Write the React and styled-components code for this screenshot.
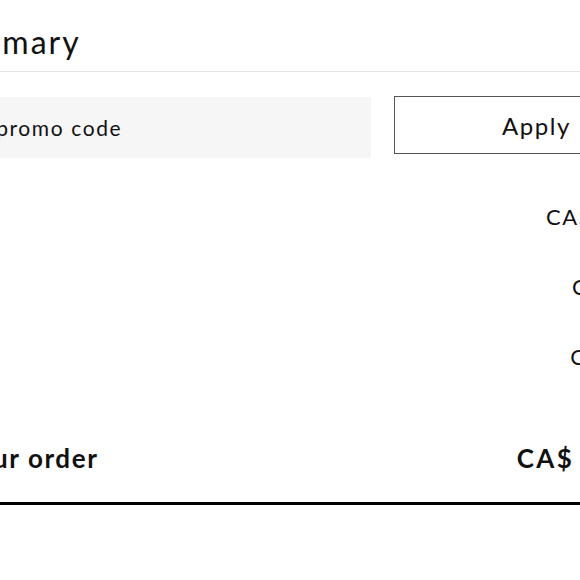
import React from "react";
import styled, { createGlobalStyle } from "styled-components";

const Global = createGlobalStyle`
  html, body { margin: 0; padding: 0; background: #fff; }
  body { font-family: Lato, "Noto Sans", sans-serif; color: #111; }
`;

const Viewport = styled.div`
  width: 580px;
  height: 580px;
  overflow: hidden;
  background: #fff;
`;

const Summary = styled.section`
  width: 835px;
  margin-left: -156px;
  display: flex;
  flex-direction: column;
`;

const Header = styled.header`
  padding: 23px 0 10px;
  border-bottom: 1px solid #e6e6e6;
`;

const Title = styled.h2`
  margin: 0 0 0 -8px;
  font-size: 32px;
  font-weight: 400;
  line-height: 38px;
  letter-spacing: 2px;
`;

const PromoForm = styled.form`
  margin-top: 25px;
  display: grid;
  grid-template-columns: 1fr 285px;
  column-gap: 23px;
  align-items: start;
`;

const PromoInput = styled.input`
  height: 61px;
  box-sizing: border-box;
  border: none;
  background: #f6f6f6;
  padding: 0 22px 0 88px;
  font-family: inherit;
  font-size: 21px;
  letter-spacing: 1.6px;
  color: #111;
  outline: none;
  &::placeholder { color: #111; opacity: 1; }
`;

const ApplyButton = styled.button`
  height: 58px;
  margin-top: -1px;
  box-sizing: border-box;
  border: 1px solid #555;
  background: #fff;
  font-family: inherit;
  font-size: 24px;
  letter-spacing: 1.6px;
  color: #111;
  cursor: pointer;
`;

const Rows = styled.div`
  margin-top: 23px;
  display: flex;
  flex-direction: column;
`;

const Row = styled.div`
  height: 70px;
  display: flex;
  align-items: center;
  justify-content: space-between;
  font-size: 22px;
  letter-spacing: 1.4px;
  font-variant-numeric: proportional-nums;
`;

const TotalRow = styled.div`
  margin-top: 23px;
  height: 88px;
  display: flex;
  align-items: center;
  justify-content: space-between;
  border-bottom: 3px solid #000;
  font-size: 26px;
  font-weight: 700;
  letter-spacing: 1.6px;
`;

const TotalAmount = styled.span`
  letter-spacing: 2.4px;
`;

const rows = [
  ["Subtotal", "CA$ 285.00"],
  ["Shipping", "CA$ 0.00"],
  ["Taxes", "CA$ 11.70"],
];

export default function App() {
  return (
    <>
      <Global />
      <Viewport>
        <Summary>
          <Header>
            <Title>Order summary</Title>
          </Header>
          <PromoForm onSubmit={(e) => e.preventDefault()}>
            <PromoInput placeholder="Enter promo code" />
            <ApplyButton type="submit">Apply</ApplyButton>
          </PromoForm>
          <Rows>
            {rows.map(([label, value]) => (
              <Row key={label}>
                <span>{label}</span>
                <span>{value}</span>
              </Row>
            ))}
          </Rows>
          <TotalRow>
            <span>Total for your order</span>
            <TotalAmount>CA$ 296.70</TotalAmount>
          </TotalRow>
        </Summary>
      </Viewport>
    </>
  );
}
